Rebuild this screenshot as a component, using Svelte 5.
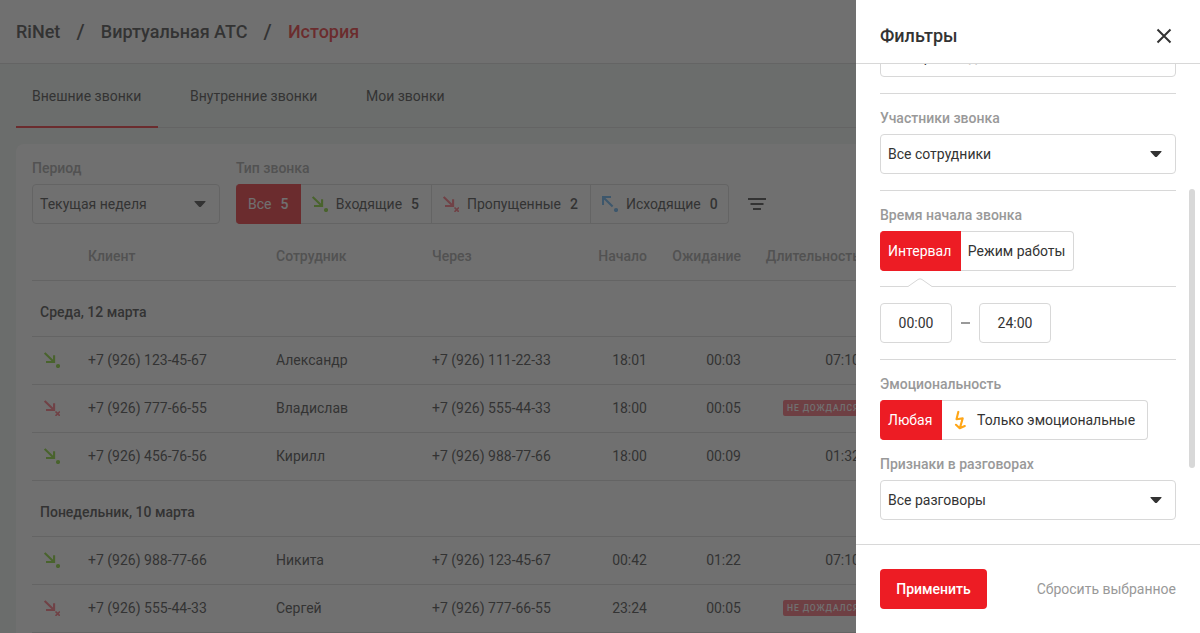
<script>
  const tabs = ['Внешние звонки', 'Внутренние звонки', 'Мои звонки'];

  const types = [
    { title: 'Все', count: 5 },
    { title: 'Входящие', count: 5, icon: 'in' },
    { title: 'Пропущенные', count: 2, icon: 'missed' },
    { title: 'Исходящие', count: 0, icon: 'out' },
  ];

  const days = [
    {
      title: 'Среда, 12 марта',
      calls: [
        { icon: 'in', client: '+7 (926) 123-45-67', name: 'Александр', via: '+7 (926) 111-22-33', start: '18:01', wait: '00:03', length: '07:10' },
        { icon: 'missed', client: '+7 (926) 777-66-55', name: 'Владислав', via: '+7 (926) 555-44-33', start: '18:00', wait: '00:05' },
        { icon: 'in', client: '+7 (926) 456-76-56', name: 'Кирилл', via: '+7 (926) 988-77-66', start: '18:00', wait: '00:09', length: '01:32' },
      ],
    },
    {
      title: 'Понедельник, 10 марта',
      calls: [
        { icon: 'in', client: '+7 (926) 988-77-66', name: 'Никита', via: '+7 (926) 123-45-67', start: '00:42', wait: '01:22', length: '07:10' },
        { icon: 'missed', client: '+7 (926) 555-44-33', name: 'Сергей', via: '+7 (926) 777-66-55', start: '23:24', wait: '00:05' },
      ],
    },
  ];

  let tab = $state(0);
  let type = $state(0);
  let time = $state(0);
  let emotion = $state(0);
  let from = $state('00:00');
  let to = $state('24:00');
</script>

{#snippet callIcon(kind)}
  <svg class="call-icon {kind}" width="16" height="16" viewBox="0 0 16 16">
    {#if kind === 'out'}
      <path d="M10.6 10.6L1.2 1.2M9 1H1V9" />
    {:else}
      <path d="M.7 .9L10 10M10.1 3.3V10H2" />
    {/if}
    {#if kind === 'missed'}
      <path class="cross" d="M11.5 11.5L15.9 15.9M15.9 11.5L11.5 15.9" />
    {:else}
      <circle cx="14" cy="14" r="2.1" />
    {/if}
  </svg>
{/snippet}

{#snippet caret()}
  <svg class="caret" width="12" height="8" viewBox="0 0 12 8">
    <path d="M1 1H11C11.6 1 11.7 1.6 11.3 2L7.2 6.4C6.5 7.1 5.5 7.1 4.8 6.4L.7 2C.3 1.6 .4 1 1 1Z" />
  </svg>
{/snippet}

<div class="page">
  <header class="crumbs">
    <span>RiNet</span>
    <i>/</i>
    <span>Виртуальная АТС</span>
    <i>/</i>
    <span class="current">История</span>
  </header>

  <nav class="tabs">
    {#each tabs as title, i}
      <button type="button" class="tab" class:active={tab === i} onclick={() => (tab = i)}>{title}</button>
    {/each}
  </nav>

  <main class="card">
    <div class="toolbar">
      <div class="period">
        <div class="label">Период</div>
        <div class="select">Текущая неделя {@render caret()}</div>
      </div>
      <div>
        <div class="label">Тип звонка</div>
        <div class="group">
          {#each types as t, i}
            <button type="button" class="type" class:active={type === i} onclick={() => (type = i)}>
              {#if t.icon}{@render callIcon(t.icon)}{/if}
              <span>{t.title}</span>
              <b>{t.count}</b>
            </button>
          {/each}
        </div>
      </div>
      <button type="button" class="filter" aria-label="Фильтры">
        <svg width="18" height="12" viewBox="0 0 18 12">
          <path d="M0 1H18M2.5 6H15.5M5 11H13" />
        </svg>
      </button>
    </div>

    <div class="row head">
      <span></span>
      <span>Клиент</span>
      <span>Сотрудник</span>
      <span>Через</span>
      <span class="num">Начало</span>
      <span class="num">Ожидание</span>
      <span class="num">Длительность</span>
    </div>
    {#each days as day}
      <div class="day">{day.title}</div>
      {#each day.calls as call}
        <div class="row">
          {@render callIcon(call.icon)}
          <span>{call.client}</span>
          <span>{call.name}</span>
          <span>{call.via}</span>
          <span class="num">{call.start}</span>
          <span class="num">{call.wait}</span>
          <span class="num">
            {#if call.length}{call.length}{:else}<em class="badge">не дождался</em>{/if}
          </span>
        </div>
      {/each}
    {/each}
  </main>
</div>

<div class="overlay"></div>

<aside class="panel">
  <header class="panel-head">
    <h2>Фильтры</h2>
    <button type="button" class="close" aria-label="Закрыть">
      <svg width="16" height="16" viewBox="0 0 16 16">
        <path d="M1.5 1.5L14.5 14.5M14.5 1.5L1.5 14.5" />
      </svg>
    </button>
  </header>

  <div class="panel-body">
    <div class="sections">
      <section>
        <div class="select"><span>Номер <span class="hint">не задан</span></span></div>
      </section>
      <section>
        <div class="label">Участники звонка</div>
        <div class="select">Все сотрудники {@render caret()}</div>
      </section>
      <section class="time">
        <div class="label">Время начала звонка</div>
        <div class="group">
          <button type="button" class:active={time === 0} onclick={() => (time = 0)}>Интервал</button>
          <button type="button" class:active={time === 1} onclick={() => (time = 1)}>Режим работы</button>
        </div>
      </section>
      <section class="interval">
        <svg class="notch" width="24" height="9" viewBox="0 0 24 9">
          <path d="M0 8.5L10 1.5C11.3 .7 12.7 .7 14 1.5L24 8.5V9H0Z" fill="#fff" stroke="none" />
          <path d="M0 8.5L10 1.5C11.3 .7 12.7 .7 14 1.5L24 8.5" />
        </svg>
        <input bind:value={from} />
        <span class="dash"></span>
        <input bind:value={to} />
      </section>
      <section>
        <div class="label">Эмоциональность</div>
        <div class="group">
          <button type="button" class:active={emotion === 0} onclick={() => (emotion = 0)}>Любая</button>
          <button type="button" class="emotional" class:active={emotion === 1} onclick={() => (emotion = 1)}>
            <svg class="bolt" width="12" height="20" viewBox="0 0 12 20">
              <path d="M4.3 1.9L2.5 9.2L8.7 8.4L6 17.6M2 14.8L5.7 18.2L10.8 16" />
            </svg>
            Только эмоциональные
          </button>
        </div>
        <div class="label second">Признаки в разговорах</div>
        <div class="select">Все разговоры {@render caret()}</div>
      </section>
    </div>
    <div class="scrollbar"></div>
  </div>

  <footer class="panel-foot">
    <button type="button" class="apply">Применить</button>
    <button type="button" class="reset">Сбросить выбранное</button>
  </footer>
</aside>

<style>
  :global(body) {
    overflow: hidden;
    font: 14px/16px Roboto, sans-serif;
    color: #333;
  }
  :global(*) {
    box-sizing: border-box;
  }
  button,
  input {
    font: inherit;
    color: inherit;
    padding: 0;
    border: 0;
    background: none;
    cursor: pointer;
  }
  .page {
    height: 633px;
    overflow: hidden;
    background: #edf3f0;
  }
  .crumbs {
    display: flex;
    align-items: center;
    height: 64px;
    padding: 0 16px;
    background: #fff;
    border-bottom: 1px solid #d8d8d8;
    font-size: 18px;
    font-weight: 500;
  }
  .crumbs i {
    width: 40.5px;
    text-align: center;
    font-size: 21px;
    font-style: normal;
  }
  .crumbs .current {
    color: #ed1c24;
  }
  .tabs {
    display: flex;
    gap: 16px;
    height: 64px;
    margin: 0 16px;
    box-shadow: inset 0 -1px #d8d8d8;
  }
  .tab {
    padding: 2px 16.6px 0 16px;
    border-bottom: 2px solid transparent;
  }
  .tab.active {
    border-color: #ed1c24;
  }
  .card {
    margin: 16px;
    padding: 16px;
    height: 560px;
    background: #fff;
    border-radius: 8px;
  }
  .toolbar {
    display: flex;
    align-items: flex-end;
    gap: 16px;
  }
  .period {
    width: 188px;
  }
  .label {
    margin-bottom: 8px;
    font-weight: 500;
    color: #999;
  }
  .select {
    display: flex;
    align-items: center;
    justify-content: space-between;
    height: 40px;
    padding: 0 13px 0 7px;
    border: 1px solid #d8d8d8;
    border-radius: 4px;
  }
  .caret {
    fill: #333;
  }
  .group {
    display: flex;
    width: max-content;
    height: 40px;
  }
  .group button {
    padding: 0 7.6px 0 7px;
    border: 1px solid #d8d8d8;
    border-left: 0;
  }
  .group button:first-child {
    padding-left: 8px;
    border-radius: 4px 0 0 4px;
  }
  .group button:last-child {
    border-radius: 0 4px 4px 0;
  }
  .group button.active {
    padding-right: 8.6px;
    background: #ed1c24;
    border-color: #ed1c24;
    color: #fff;
  }
  .group .type {
    display: flex;
    align-items: center;
    gap: 8px;
    padding: 0 12px 0 11px;
  }
  .group .type:first-child {
    padding: 0 11.5px 0 12px;
  }
  .group .type:last-child {
    padding-right: 10px;
  }
  .type b {
    margin-left: 0.9px;
    font-weight: 500;
  }
  .call-icon {
    fill: none;
    stroke-width: 2.1;
  }
  .call-icon circle {
    stroke: none;
  }
  .cross {
    stroke-width: 1.7;
  }
  .in {
    stroke: #7ed321;
  }
  .in circle {
    fill: #7ed321;
  }
  .missed {
    stroke: #ff6473;
  }
  .out {
    stroke: #55aaf0;
  }
  .out circle {
    fill: #55aaf0;
  }
  .filter {
    display: flex;
    align-items: center;
    height: 40px;
    padding: 0 3px;
  }
  .filter svg {
    stroke: #333;
    stroke-width: 2;
  }
  .row {
    display: grid;
    grid-template-columns: 56px 188px 156px 121px 94px 94px 119px;
    align-items: center;
    height: 48px;
    padding-bottom: 1px;
    border-bottom: 1px solid #d8d8d8;
  }
  .row .call-icon {
    margin-left: 12px;
  }
  .head {
    height: 57px;
    padding: 8px 0 0;
    font-weight: 500;
    color: #999;
  }
  .num {
    text-align: right;
  }
  .day {
    height: 56px;
    padding: 23px 8px 0;
    border-bottom: 1px solid #d8d8d8;
    font-weight: 500;
  }
  .badge {
    display: inline-block;
    width: 77px;
    padding-left: 4px;
    background: #f85a6a;
    border-radius: 2px;
    color: #fff;
    font: 500 8.5px/16px Roboto, sans-serif;
    letter-spacing: 0.9px;
    text-align: left;
    text-transform: uppercase;
    vertical-align: top;
    white-space: nowrap;
  }
  .overlay {
    position: fixed;
    inset: 0;
    background: rgba(51, 51, 51, 0.7);
  }
  .panel {
    position: fixed;
    top: 0;
    right: 0;
    bottom: 0;
    display: flex;
    flex-direction: column;
    width: 344px;
    background: #fff;
  }
  .panel-head {
    display: flex;
    align-items: center;
    justify-content: space-between;
    height: 64px;
    padding: 9px 28px 0 24px;
    border-bottom: 1px solid #d8d8d8;
  }
  .panel-head h2 {
    margin: 0;
    font-size: 18px;
    font-weight: 500;
  }
  .close {
    display: flex;
  }
  .close svg {
    stroke: #333;
    stroke-width: 2;
  }
  .panel-body {
    position: relative;
    flex: 1;
    overflow: hidden;
  }
  /* list is scrolled down a little */
  .sections {
    margin: -43px 24px 0;
  }
  section {
    padding: 16px 0;
  }
  section + section {
    border-top: 1px solid #d8d8d8;
  }
  .time {
    padding-bottom: 15px;
  }
  .hint {
    color: #999;
  }
  .interval {
    position: relative;
    display: flex;
    align-items: center;
  }
  .notch {
    position: absolute;
    top: -9px;
    left: 28px;
    fill: none;
    stroke: #d8d8d8;
  }
  .interval input {
    width: 72px;
    height: 40px;
    border: 1px solid #d8d8d8;
    border-radius: 4px;
    text-align: center;
  }
  .dash {
    width: 9px;
    height: 2px;
    margin: 0 9px;
    background: #999;
  }
  .group .emotional {
    display: flex;
    align-items: center;
    gap: 11px;
    padding: 0 11.5px 0 12px;
  }
  .bolt {
    fill: none;
    stroke: #ffa617;
    stroke-width: 2.1;
    stroke-linecap: round;
    stroke-linejoin: round;
  }
  .second {
    margin-top: 16px;
  }
  .scrollbar {
    position: absolute;
    top: 125px;
    right: 5px;
    width: 6px;
    height: 279px;
    background: #d8d8d8;
    border-radius: 3px;
  }
  .panel-foot {
    display: flex;
    align-items: center;
    justify-content: space-between;
    height: 89px;
    padding: 0 24px;
    border-top: 1px solid #d8d8d8;
  }
  .apply {
    height: 40px;
    padding: 0 16.3px;
    background: #ed1c24;
    border-radius: 4px;
    color: #fff;
    font-weight: 500;
  }
  .reset {
    color: #999;
  }
</style>
